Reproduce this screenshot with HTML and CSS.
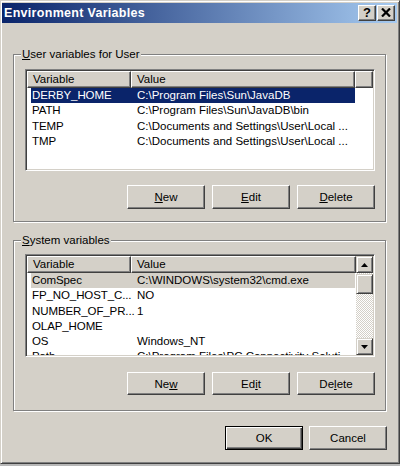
FILE: index.html
```html
<!DOCTYPE html>
<html>
<head>
<meta charset="utf-8">
<title>Environment Variables</title>
<link rel="stylesheet" href="styles.css">
</head>
<body>
<div class="window">
  <div class="titlebar">
    <span class="title">Environment Variables</span>
    <div class="caption-buttons">
      <div class="cap-btn help">?</div>
      <div class="cap-btn close">
        <svg width="10" height="9" viewBox="0 0 10 9"><path d="M1 0.5 L9 8.5 M9 0.5 L1 8.5" stroke="#000" stroke-width="2.2" fill="none"/></svg>
      </div>
    </div>
  </div>

  <div class="group group-user">
    <div class="legend"><u>U</u>ser variables for User</div>
    <div class="list list-user">
      <div class="list-main">
        <div class="header">
          <div class="hcell c1">Variable</div>
          <div class="hcell c2">Value</div>
          <div class="hcell filler"></div>
        </div>
        <div class="rows">
          <div class="row selected"><span class="rc1">DERBY_HOME</span><span class="rc2">C:\Program Files\Sun\JavaDB</span></div>
          <div class="row"><span class="rc1">PATH</span><span class="rc2">C:\Program Files\Sun\JavaDB\bin</span></div>
          <div class="row"><span class="rc1">TEMP</span><span class="rc2">C:\Documents and Settings\User\Local ...</span></div>
          <div class="row"><span class="rc1">TMP</span><span class="rc2">C:\Documents and Settings\User\Local ...</span></div>
        </div>
      </div>
    </div>
    <div class="buttons buttons-user">
      <div class="btn"><u>N</u>ew</div>
      <div class="btn"><u>E</u>dit</div>
      <div class="btn"><u>D</u>elete</div>
    </div>
  </div>

  <div class="group group-sys">
    <div class="legend"><u>S</u>ystem variables</div>
    <div class="list list-sys">
      <div class="list-main">
        <div class="header">
          <div class="hcell c1">Variable</div>
          <div class="hcell c2 grow">Value</div>
        </div>
        <div class="rows">
          <div class="row inactive"><span class="rc1">ComSpec</span><span class="rc2">C:\WINDOWS\system32\cmd.exe</span></div>
          <div class="row"><span class="rc1">FP_NO_HOST_C...</span><span class="rc2">NO</span></div>
          <div class="row"><span class="rc1">NUMBER_OF_PR...</span><span class="rc2">1</span></div>
          <div class="row"><span class="rc1">OLAP_HOME</span><span class="rc2"></span></div>
          <div class="row"><span class="rc1">OS</span><span class="rc2">Windows_NT</span></div>
          <div class="row"><span class="rc1">Path</span><span class="rc2">C:\Program Files\PC Connectivity Soluti...</span></div>
        </div>
      </div>
      <div class="scrollbar">
        <div class="sb-btn"><svg width="7" height="4" viewBox="0 0 7 4"><polygon points="3.5,0 7,4 0,4" fill="#000"/></svg></div>
        <div class="sb-thumb"></div>
        <div class="sb-track"></div>
        <div class="sb-btn"><svg width="7" height="4" viewBox="0 0 7 4"><polygon points="0,0 7,0 3.5,4" fill="#000"/></svg></div>
      </div>
    </div>
    <div class="buttons buttons-sys">
      <div class="btn">Ne<u>w</u></div>
      <div class="btn">Ed<u>i</u>t</div>
      <div class="btn">De<u>l</u>ete</div>
    </div>
  </div>

  <div class="dialog-buttons">
    <div class="btn default">OK</div>
    <div class="btn">Cancel</div>
  </div>
</div>
</body>
</html>
```

FILE: styles.css
```css
html, body {
  margin: 0;
  padding: 0;
  background: #b8b8b8;
}

body {
  font-family: "Liberation Sans", Arial, sans-serif;
  font-size: 11.5px;
  color: #000;
}

.window {
  box-sizing: border-box;
  width: 400px;
  height: 464px;
  background: #d4d0c8;
  border: 1px solid;
  border-color: #d4d0c8 #404040 #404040 #d4d0c8;
  box-shadow: inset 1px 1px 0 #fff, inset -1px -1px 0 #808080;
  padding: 2px 2px 0 1px;
}

.titlebar {
  height: 20px;
  display: flex;
  align-items: center;
  justify-content: space-between;
  background: linear-gradient(to right, #0a246a, #a6caf0);
  padding: 0 2px 0 2px;
}

.title {
  color: #fff;
  font-weight: bold;
  font-size: 12.5px;
  letter-spacing: 0.3px;
}

.caption-buttons {
  display: flex;
  gap: 1px;
  margin-top: -1px;
}

.cap-btn {
  box-sizing: border-box;
  width: 18px;
  height: 16px;
  background: #d4d0c8;
  border: 1px solid;
  border-color: #fff #404040 #404040 #fff;
  box-shadow: inset -1px -1px 0 #808080;
  display: flex;
  align-items: center;
  justify-content: center;
}

.cap-btn.help {
  font-weight: bold;
  font-size: 13px;
  line-height: 14px;
}

.group {
  box-sizing: border-box;
  margin: 31px 11px 0 11px;
  border: 1px solid #808080;
  box-shadow: 1px 1px 0 #fff, inset 1px 1px 0 #fff;
  padding: 0 10px 0 11px;
}

.group-user {
  height: 168px;
}

.group-sys {
  margin-top: 18px;
  height: 171px;
}

.legend {
  width: fit-content;
  margin: -8px 0 0 -4px;
  padding: 0 1px;
  line-height: 14px;
  background: #d4d0c8;
}

.list {
  box-sizing: border-box;
  width: 350px;
  background: #fff;
  border: 1px solid;
  border-color: #808080 #fff #fff #808080;
  box-shadow: inset 1px 1px 0 #404040, inset -1px -1px 0 #d4d0c8;
  padding: 1px;
  display: flex;
  overflow: hidden;
}

.list-user {
  margin-top: 8px;
  height: 102px;
}

.list-sys {
  margin-top: 7px;
  height: 103px;
}

.list-main {
  flex: 1;
  min-width: 0;
  overflow: hidden;
}

.header {
  display: flex;
  height: 17px;
}

.hcell {
  box-sizing: border-box;
  height: 17px;
  background: #d4d0c8;
  border: 1px solid;
  border-color: #fff #404040 #404040 #fff;
  box-shadow: inset -1px -1px 0 #808080;
  line-height: 15px;
  padding-left: 5px;
  white-space: nowrap;
}

.hcell.c1 {
  width: 104px;
}

.hcell.c2 {
  width: 224px;
}

.hcell.grow, .hcell.filler {
  flex: 1;
}

.row {
  display: flex;
  height: 15.3px;
  line-height: 15px;
  margin-left: 4px;
  width: 324px;
  white-space: nowrap;
}

.row.selected {
  background: #0a246a;
  color: #fff;
}

.row.inactive {
  background: #d4d0c8;
}

.rc1 {
  flex: none;
  width: 99px;
  padding-left: 1px;
  letter-spacing: -0.1px;
}

.rc2 {
  flex: 1;
  min-width: 0;
  padding-left: 6px;
  overflow: hidden;
}

.scrollbar {
  width: 17px;
  display: flex;
  flex-direction: column;
  background-color: #eeece8;
  background-image: repeating-conic-gradient(#fff 0 25%, #d4d0c8 0 50%);
  background-size: 2px 2px;
}

.sb-btn, .sb-thumb {
  box-sizing: border-box;
  background: #d4d0c8;
  border: 1px solid;
  border-color: #d4d0c8 #404040 #404040 #d4d0c8;
  box-shadow: inset 1px 1px 0 #fff, inset -1px -1px 0 #808080;
}

.sb-btn {
  height: 17px;
  display: flex;
  align-items: center;
  justify-content: center;
}

.sb-thumb {
  height: 20px;
  margin-top: 1px;
}

.sb-track {
  flex: 1;
}

.buttons {
  display: flex;
  justify-content: flex-end;
  gap: 7px;
}

.buttons-user {
  margin-top: 14px;
}

.buttons-sys {
  margin-top: 15px;
}

.btn {
  box-sizing: border-box;
  width: 78px;
  height: 24px;
  background: #d4d0c8;
  border: 1px solid;
  border-color: #fff #404040 #404040 #fff;
  box-shadow: inset -1px -1px 0 #808080;
  display: flex;
  align-items: center;
  justify-content: center;
}

.buttons-sys .btn {
  height: 23px;
}

.dialog-buttons {
  display: flex;
  justify-content: flex-end;
  gap: 6px;
  margin: 15px 10px 0 0;
}

.btn.default {
  border: 1px solid #000;
  box-shadow: inset 1px 1px 0 #fff, inset -1px -1px 0 #404040, inset -2px -2px 0 #808080;
}
```
